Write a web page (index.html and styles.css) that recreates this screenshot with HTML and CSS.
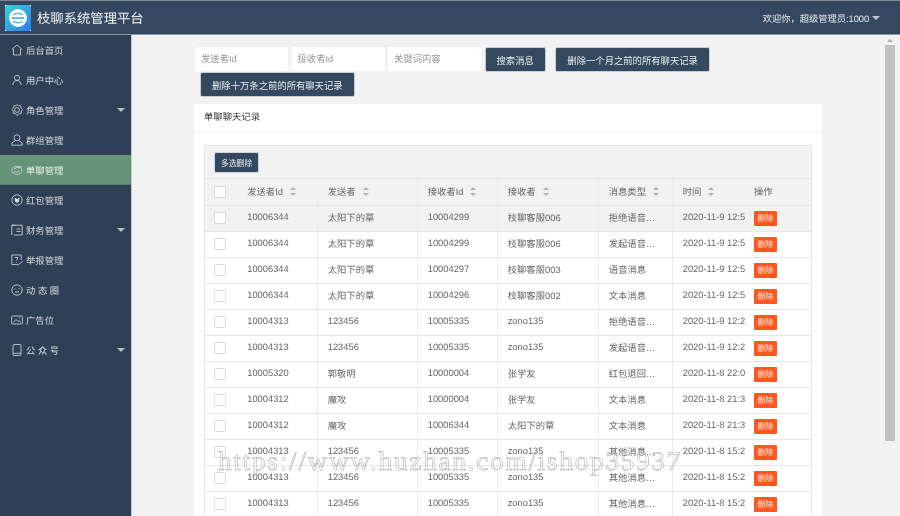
FILE: index.html
```html
<!DOCTYPE html>
<html lang="zh-CN">
<head>
<meta charset="utf-8">
<title>枝聊系统管理平台</title>
<link rel="stylesheet" href="styles.css">
</head>
<body>
<header class="topbar">
  <div class="brand">
    <svg class="logo" viewBox="0 0 26 26">
      <defs><linearGradient id="lg" x1="0" y1="0" x2="1" y2="1"><stop offset="0" stop-color="#3ad2dc"/><stop offset="1" stop-color="#2f7bea"/></linearGradient></defs>
      <rect width="26" height="26" fill="url(#lg)"/>
      <path d="M0 1h1V0H0zM25 1h1V0h-1zM0 26h1v-1H0zM25 26h1v-1h-1z" fill="#fff"/>
      <circle cx="13" cy="13" r="9" fill="#fff"/>
      <path d="M8 10q5-3.500 10 0M8 16q5 3.500 10 0" fill="none" stroke="#5ab6ee" stroke-width="1.400"/>
      <rect x="7" y="12.200" width="12" height="1.600" fill="#45a9ec"/>
    </svg>
    <span class="brand-name">枝聊系统管理平台</span>
  </div>
  <div class="welcome">欢迎你，超级管理员:1000<i class="caret caret-top"></i></div>
</header>
<div class="body-row">
  <nav class="side">
    <a class="nav-item"><svg class="ico" viewBox="0 0 12 12"><path d="M.8 5.500 6 1l5.200 4.500M2.500 5v6h7V5"/></svg><span>后台首页</span></a>
    <a class="nav-item"><svg class="ico" viewBox="0 0 12 12"><circle cx="6" cy="3.800" r="2.600"/><path d="M1.800 11q.6-4.500 4.200-4.500T10.200 11"/></svg><span>用户中心</span></a>
    <a class="nav-item"><svg class="ico" viewBox="0 0 12 12"><circle cx="6" cy="6" r="2.400"/><path d="M6 .5l1.600 1.300 2.100-.1.300 2.100 1.500 1.600-1.200 1.700.1 2.100-2.100.4L6 11.500 4.300 9.600l-2.100-.4.100-2.100L1 5.400 2.500 3.800l.3-2.100 2.100.1z"/></svg><span>角色管理</span><i class="caret"></i></a>
    <a class="nav-item"><svg class="ico" viewBox="0 0 12 12"><circle cx="6" cy="3.800" r="3"/><path d="M4.500 6.500.8 9v2.200h10.400V9L7.500 6.500"/></svg><span>群组管理</span></a>
    <a class="nav-item active"><svg class="ico" viewBox="0 0 12 12"><ellipse cx="5.800" cy="6.400" rx="5" ry="4"/><path d="M3 5.500q3-3.500 6-1.500M3 7.800q3 1 5.500-.8M8 2.500l3 .5"/></svg><span>单聊管理</span></a>
    <a class="nav-item"><svg class="ico" viewBox="0 0 12 12"><circle cx="6" cy="6" r="5.200"/><path class="solid" d="M3.500 3.500 6 5l2.500-1.500L8 7.500 6 9 4 7.500z"/></svg><span>红包管理</span></a>
    <a class="nav-item"><svg class="ico" viewBox="0 0 12 12"><path d="M.8 11V1.200h10.400V11H3M.8 1.200h2.500M4 1v1.200M5.500 5h4M5.500 7.500h4"/></svg><span>财务管理</span><i class="caret"></i></a>
    <a class="nav-item"><svg class="ico" viewBox="0 0 12 12"><path d="M6.500 10.500H.8V1h9.400v5M4 3.500h3L5.500 6.500M5.500 8v.5M6.500 11.200 11.500 7.500"/></svg><span>举报管理</span></a>
    <a class="nav-item"><svg class="ico" viewBox="0 0 12 12"><circle cx="6" cy="6" r="5.200"/><path d="M3.500 4.800h1M7.500 4.800h1M4 8h4"/></svg><span class="wide">动 态 圈</span></a>
    <a class="nav-item"><svg class="ico" viewBox="0 0 12 12"><rect x=".6" y="2" width="10.800" height="8" rx="1"/><path d="M2.500 8.500 5 5.500l2 2 1-1 1.500 2M8 3.800h1"/></svg><span>广告位</span></a>
    <a class="nav-item"><svg class="ico" viewBox="0 0 12 12"><rect x="2" y=".5" width="8" height="11" rx="1"/><path d="M2 9.300h8"/></svg><span class="wide">公 众 号</span><i class="caret"></i></a>
  </nav>
  <main class="main">
    <div class="content">
      <form class="search">
        <input class="field" placeholder="发送者Id">
        <input class="field" placeholder="接收者Id">
        <input class="field" placeholder="关键词内容">
        <button class="btn" type="button">搜索消息</button>
        <button class="btn btn-month" type="button">删除一个月之前的所有聊天记录</button>
        <button class="btn btn-big" type="button">删除十万条之前的所有聊天记录</button>
      </form>
      <section class="card">
        <div class="card-title">单聊聊天记录</div>
        <div class="card-body">
          <div class="grid">
            <div class="toolbar"><button class="btn btn-small" type="button">多选删除</button></div>
            <table>
              <colgroup><col class="c0"><col class="c1"><col class="c2"><col class="c3"><col class="c4"><col class="c5"><col class="c6"><col class="c7"></colgroup>
              <thead>
                <tr>
                  <th class="fix-l"><i class="check"></i></th>
                  <th>发送者Id<i class="sort"></i></th>
                  <th>发送者<i class="sort"></i></th>
                  <th>接收者Id<i class="sort"></i></th>
                  <th>接收者<i class="sort"></i></th>
                  <th>消息类型<i class="sort"></i></th>
                  <th>时间<i class="sort"></i></th>
                  <th class="fix-r">操作</th>
                </tr>
              </thead>
              <tbody>
                <tr class="hover"><td class="fix-l"><i class="check"></i></td><td>10006344</td><td>太阳下的草</td><td>10004299</td><td>枝聊客服006</td><td>拒绝语音…</td><td>2020-11-9 12:50</td><td class="fix-r"><b class="del">删除</b></td></tr>
                <tr><td class="fix-l"><i class="check"></i></td><td>10006344</td><td>太阳下的草</td><td>10004299</td><td>枝聊客服006</td><td>发起语音…</td><td>2020-11-9 12:50</td><td class="fix-r"><b class="del">删除</b></td></tr>
                <tr><td class="fix-l"><i class="check"></i></td><td>10006344</td><td>太阳下的草</td><td>10004297</td><td>枝聊客服003</td><td>语音消息</td><td>2020-11-9 12:50</td><td class="fix-r"><b class="del">删除</b></td></tr>
                <tr><td class="fix-l"><i class="check"></i></td><td>10006344</td><td>太阳下的草</td><td>10004296</td><td>枝聊客服002</td><td>文本消息</td><td>2020-11-9 12:50</td><td class="fix-r"><b class="del">删除</b></td></tr>
                <tr><td class="fix-l"><i class="check"></i></td><td>10004313</td><td>123456</td><td>10005335</td><td>zono135</td><td>拒绝语音…</td><td>2020-11-9 12:20</td><td class="fix-r"><b class="del">删除</b></td></tr>
                <tr><td class="fix-l"><i class="check"></i></td><td>10004313</td><td>123456</td><td>10005335</td><td>zono135</td><td>发起语音…</td><td>2020-11-9 12:20</td><td class="fix-r"><b class="del">删除</b></td></tr>
                <tr><td class="fix-l"><i class="check"></i></td><td>10005320</td><td>郭敬明</td><td>10000004</td><td>张学友</td><td>红包退回…</td><td>2020-11-8 22:00</td><td class="fix-r"><b class="del">删除</b></td></tr>
                <tr><td class="fix-l"><i class="check"></i></td><td>10004312</td><td>魔攻</td><td>10000004</td><td>张学友</td><td>文本消息</td><td>2020-11-8 21:30</td><td class="fix-r"><b class="del">删除</b></td></tr>
                <tr><td class="fix-l"><i class="check"></i></td><td>10004312</td><td>魔攻</td><td>10006344</td><td>太阳下的草</td><td>文本消息</td><td>2020-11-8 21:30</td><td class="fix-r"><b class="del">删除</b></td></tr>
                <tr><td class="fix-l"><i class="check"></i></td><td>10004313</td><td>123456</td><td>10005335</td><td>zono135</td><td>其他消息…</td><td>2020-11-8 15:20</td><td class="fix-r"><b class="del">删除</b></td></tr>
                <tr><td class="fix-l"><i class="check"></i></td><td>10004313</td><td>123456</td><td>10005335</td><td>zono135</td><td>其他消息…</td><td>2020-11-8 15:20</td><td class="fix-r"><b class="del">删除</b></td></tr>
                <tr><td class="fix-l"><i class="check"></i></td><td>10004313</td><td>123456</td><td>10005335</td><td>zono135</td><td>其他消息…</td><td>2020-11-8 15:20</td><td class="fix-r"><b class="del">删除</b></td></tr>
              </tbody>
            </table>
          </div>
        </div>
      </section>
    </div>
    <div class="scrollbar"><i class="arrow"></i><div class="thumb"></div></div>
  </main>
</div>
<div class="watermark">https://www.huzhan.com/ishop35937</div>
</body>
</html>
```
FILE: styles.css
```css
* { box-sizing: border-box; }
html, body { margin: 0; height: 516px; overflow: hidden; }
body {
  width: 900px;
  display: flex;
  flex-direction: column;
  position: relative;
  font-family: "Liberation Sans", "Noto Sans CJK SC", sans-serif;
  font-size: 9.33px;
  color: #666;
  background: #f2f2f2;
  text-rendering: geometricPrecision;
  filter: blur(.3px);
}
i { display: inline-block; font-style: normal; }

.topbar {
  height: 35px;
  flex: none;
  display: flex;
  align-items: center;
  justify-content: space-between;
  background: #34495f;
  border-top: 1px solid #7c8894;
  border-bottom: 1px solid #8e99a5;
  padding: 0 20px 0 5px;
}
.brand { display: flex; align-items: center; gap: 6px; }
.logo { width: 26px; height: 26px; display: block; }
.brand-name { color: #eef1f4; font-size: 13.33px; }
.welcome { color: #e6e9ed; font-size: 9.33px; display: flex; align-items: center; letter-spacing: -.08px; }
.caret {
  width: 0; height: 0;
  border-left: 4px solid transparent;
  border-right: 4px solid transparent;
  border-top: 4px solid #c3c9d0;
}
.caret-top { margin-left: 3px; margin-top: 1px; }

.body-row { flex: 1; display: flex; min-height: 0; }
.side {
  width: 132px;
  flex: none;
  background: #2f4056;
  border-right: 1px solid #c5cbd1;
}
.nav-item {
  height: 30px;
  display: flex;
  align-items: center;
  padding: 0 6px 0 11px;
  color: #d6dbe0;
  font-size: 9.33px;
  gap: 3px;
}
.nav-item .caret { margin-left: auto; border-top-color: #b9c0c8; }
.nav-item.active { background: #659479; color: #e8efea; border-bottom: 1px solid #59806c; }
.ico { width: 12px; height: 12px; flex: none; fill: none; stroke: #d3dae1; stroke-width: .8; }
.solid { fill: #d3dae1; stroke: none; }

.main { flex: 1; display: flex; min-width: 0; position: relative; }
.content { flex: 1; min-width: 0; overflow: hidden; padding: 12px 0 0; }
.search {
  width: 530px;
  margin-left: 63px;
  display: flex;
  flex-wrap: wrap;
  align-items: flex-start;
  column-gap: 3.500px;
  padding-bottom: 7px;
}
.field {
  width: 93px;
  height: 24px;
  border: 0;
  background: #fff;
  padding: 0 6px;
  font: inherit;
  color: #666;
  border-radius: 1px;
  outline: 0;
}
.field::placeholder { color: #999; }
.btn {
  height: 25px;
  border: 1px solid #c8ced5;
  border-radius: 2px;
  background: #34495f;
  color: #e9ecef;
  font: inherit;
  padding: 0 11px;
  white-space: nowrap;
}
.btn-month { margin-left: 6px; }
.btn-big { margin-left: 5px; }
.card {
  margin-left: 62px;
  width: 628px;
  background: #fff;
}
.card-title {
  height: 28px;
  line-height: 27px;
  padding-left: 10px;
  color: #333;
  border-bottom: 1px solid #f4f4f4;
}
.card-body { padding: 13px 10px 0; }
.grid { border: 1px solid #e6e6e6; }
.toolbar {
  height: 33px;
  background: #f2f2f2;
  padding: 6px 9px 0;
  border-bottom: 1px solid #e6e6e6;
}
.btn-small { display: block; height: 21px; padding: 0 6px; font-size: 7.800px; border-color: #d0d5da; }
table {
  width: 606px;
  border-collapse: collapse;
  table-layout: fixed;
}
.c0 { width: 32px; } .c1 { width: 80px; } .c2 { width: 100px; } .c3 { width: 80px; }
.c4 { width: 101px; } .c5 { width: 74px; } .c6 { width: 73px; } .c7 { width: 66px; }
th, td {
  height: 26px;
  padding: 0 10px 2px 10.200px;
  text-align: left;
  font-weight: 400;
  white-space: nowrap;
  overflow: hidden;
  border-right: 1px solid #ececec;
  border-bottom: 1px solid #e6e6e6;
  color: #666;
}
th { background: #f2f2f2; }
tr.hover td { background: #f2f2f2; }
.fix-l { padding: 0 0 0 9px; box-shadow: 3px 0 3px -1px rgba(0,0,0,.06); position: relative; border-right: 0; overflow: visible; }
.fix-r { padding: 0 0 2px 9px; box-shadow: -3px 0 4px -1px rgba(0,0,0,.06); position: relative; border-right: 0; overflow: visible; }
td.fix-r { padding-bottom: 0; }
td:nth-child(7), th:nth-child(7) { padding-right: 0; border-right: 0; }
.check {
  display: block;
  width: 12px; height: 12px;
  background: #fff;
  border: 1px solid #dcdcdc;
  border-radius: 1px;
}
.sort {
  position: relative;
  width: 7px; height: 9px;
  margin-left: 7px;
  vertical-align: -1px;
}
.sort::before, .sort::after {
  content: "";
  position: absolute;
  left: 0;
  border-left: 3.500px solid transparent;
  border-right: 3.500px solid transparent;
}
.sort::before { top: 0; border-bottom: 3.500px solid #b2b2b2; }
.sort::after { bottom: 0; border-top: 3.500px solid #b2b2b2; }
.del {
  display: block;
  width: 23px;
  height: 15px;
  line-height: 15px;
  text-align: center;
  font-weight: 400;
  font-size: 8px;
  color: #fbe5dd;
  background: #ff5722;
  border-radius: 1px;
}

.scrollbar {
  width: 15px;
  flex: none;
  padding-top: 10px;
  position: relative;
}
.arrow {
  position: absolute;
  left: 2px; top: 4px;
  width: 0; height: 0;
  border-left: 3px solid transparent;
  border-right: 3px solid transparent;
  border-bottom: 3px solid #a8a8a8;
}
.thumb { width: 10px; height: 396px; background: #c1c1c1; }

.watermark {
  position: absolute;
  left: 218px;
  top: 446px;
  font-family: "Liberation Serif", serif;
  font-size: 27px;
  letter-spacing: 1.850px;
  color: rgba(255,255,255,.3);
  -webkit-text-stroke: .5px #a5a5a5;
  white-space: nowrap;
}
```
